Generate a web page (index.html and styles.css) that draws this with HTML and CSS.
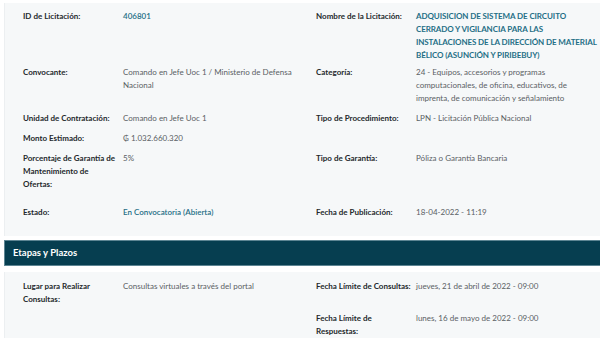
FILE: index.html
```html
<!DOCTYPE html>
<html lang="es">
<head>
<meta charset="utf-8">
<title>Licitación 406801</title>
<link rel="stylesheet" href="styles.css">
</head>
<body>
<div class="page">
  <section class="panel panel-top">
    <div class="row row-r1">
      <div class="field"><span class="label">ID de Licitación:</span><span class="value link">406801</span></div>
      <div class="field"><span class="label">Nombre de la Licitación:</span><span class="value title">ADQUISICION DE SISTEMA DE CIRCUITO CERRADO Y VIGILANCIA PARA LAS INSTALACIONES DE LA DIRECCIÓN DE MATERIAL BÉLICO (ASUNCIÓN Y PIRIBEBUY)</span></div>
    </div>
    <div class="row row-r2">
      <div class="field"><span class="label">Convocante:</span><span class="value">Comando en Jefe Uoc 1 / Ministerio de Defensa Nacional</span></div>
      <div class="field"><span class="label">Categoría:</span><span class="value">24 - Equipos, accesorios y programas computacionales, de oficina, educativos, de imprenta, de comunicación y señalamiento</span></div>
    </div>
    <div class="row">
      <div class="field"><span class="label">Unidad de Contratación:</span><span class="value">Comando en Jefe Uoc 1</span></div>
      <div class="field"><span class="label">Tipo de Procedimiento:</span><span class="value">LPN - Licitación Pública Nacional</span></div>
    </div>
    <div class="row">
      <div class="field"><span class="label">Monto Estimado:</span><span class="value">₲ 1.032.660.320</span></div>
      <div class="field"></div>
    </div>
    <div class="row row-r5">
      <div class="field"><span class="label">Porcentaje de Garantía de Mantenimiento de Ofertas:</span><span class="value">5%</span></div>
      <div class="field"><span class="label">Tipo de Garantía:</span><span class="value">Póliza o Garantía Bancaria</span></div>
    </div>
    <div class="row">
      <div class="field"><span class="label">Estado:</span><span class="value link">En Convocatoria (Abierta)</span></div>
      <div class="field"><span class="label">Fecha de Publicación:</span><span class="value">18-04-2022 - 11:19</span></div>
    </div>
  </section>

  <h2 class="section-bar">Etapas y Plazos</h2>

  <section class="panel panel-bottom">
    <div class="row row-r7">
      <div class="field"><span class="label">Lugar para Realizar Consultas:</span><span class="value">Consultas virtuales a través del portal</span></div>
      <div class="field"><span class="label">Fecha Límite de Consultas:</span><span class="value">jueves, 21 de abril de 2022 - 09:00</span></div>
    </div>
    <div class="row">
      <div class="field"></div>
      <div class="field"><span class="label">Fecha Límite de Respuestas:</span><span class="value">lunes, 16 de mayo de 2022 - 09:00</span></div>
    </div>
  </section>
</div>
</body>
</html>
```

FILE: styles.css
```css
* {
  box-sizing: border-box;
}

html, body {
  margin: 0;
  background: #ffffff;
}

body {
  font-family: Lato, "Open Sans", "Noto Sans", sans-serif;
  font-size: 8px;
  line-height: 13px;
  color: #555c60;
  overflow: hidden;
}

.page {
  padding: 3px 0 0 4px;
  width: 610px;
}

.panel {
  background: #f6f8f9;
  border-left: 1px solid #eceff1;
}

.panel-top {
  padding: 7px 0 17px;
}

.panel-bottom {
  margin-top: 6px;
  padding: 8px 0 8px;
}

.row {
  display: grid;
  grid-template-columns: 293px 300px;
  padding-bottom: 7px;
}

.row:last-child {
  padding-bottom: 0;
}

.row-r1 {
  padding-bottom: 4px;
}

.row-r5 {
  padding-bottom: 15px;
}

.row-r7 {
  padding-bottom: 6px;
}

.field {
  display: grid;
  grid-template-columns: 96px 175px;
  column-gap: 4px;
  padding-left: 18px;
}

.label {
  font-weight: 700;
  color: #24292c;
}

.value {
  color: #5a6064;
}

.link {
  color: #1f6f86;
  font-weight: 600;
}

.title {
  color: #1f6f86;
  font-weight: 700;
  width: 182px;
  letter-spacing: -0.1px;
}

.section-bar {
  margin: 4px 0 0;
  height: 26px;
  padding: 0 0 0 8px;
  background: #063e50;
  border: 1px solid #5d8593;
  border-right: none;
  color: #ffffff;
  font-size: 9.5px;
  font-weight: 700;
  line-height: 24px;
}
```
